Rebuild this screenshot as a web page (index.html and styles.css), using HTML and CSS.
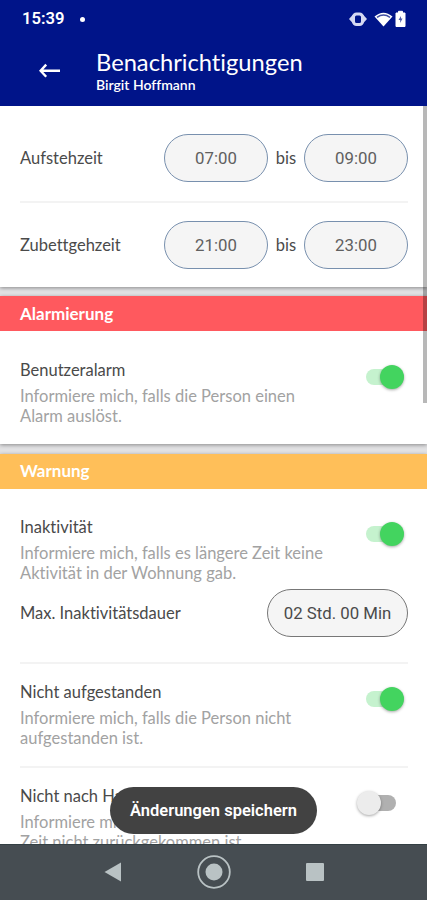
FILE: index.html
```html
<!DOCTYPE html>
<html lang="de">
<head>
<meta charset="UTF-8">
<meta name="viewport" content="width=device-width, initial-scale=1">
<title>Benachrichtigungen</title>
<link rel="stylesheet" href="styles.css">
</head>
<body>
<div class="phone">
    <header class="header">
        <div class="status">
            <span class="clock">15:39</span>
            <span class="dot"></span>
            <svg class="status-icons" width="60" height="20" viewBox="0 0 60 20">
                <path d="M1 10l4.500-5v10zM19 10l-4.500-5v10z" fill="#d5d9f2"/>
                <rect x="5.500" y="5" width="9" height="10.500" rx="3" fill="none" stroke="#d5d9f2" stroke-width="3"/>
                <path d="M26.500 7.500Q35.500-.2 44.500 7.500L35.500 17.500z" fill="#fff"/>
                <path d="M29 8.300Q35.500 3.800 42 8.300" fill="none" stroke="#3f4da3" stroke-width="1.500"/>
                <path d="M48 4h2.500V2.300h4V4H57v13.500h-9z" fill="#fff" stroke="#fff" stroke-linejoin="round"/>
                <path d="M53 7l-2.500 4h1.700v3l2.300-4.500H53z" fill="#4c59a8"/>
            </svg>
        </div>
        <div class="toolbar">
            <svg class="back" width="22" height="16" viewBox="0 0 22 16">
                <path d="M7.200 1.600L1.600 7.700l5.600 6M1.800 7.700H21" fill="none" stroke="#fff" stroke-width="2.400"/>
            </svg>
            <div class="titles">
                <h1>Benachrichtigungen</h1>
                <p>Birgit Hoffmann</p>
            </div>
        </div>
    </header>

    <main class="content">
        <section class="card times">
            <div class="time-row">
                <span class="label">Aufstehzeit</span>
                <span class="pill">07:00</span>
                <span class="until">bis</span>
                <span class="pill">09:00</span>
            </div>
            <div class="time-row">
                <span class="label">Zubettgehzeit</span>
                <span class="pill">21:00</span>
                <span class="until">bis</span>
                <span class="pill">23:00</span>
            </div>
        </section>

        <section class="card alarm">
            <h2 class="red">Alarmierung</h2>
            <div class="item">
                <div class="text">
                    <h3>Benutzeralarm</h3>
                    <p>Informiere mich, falls die Person einen<br>Alarm auslöst.</p>
                </div>
                <span class="switch on"></span>
            </div>
        </section>

        <section class="card warning">
            <h2 class="orange">Warnung</h2>
            <div class="item">
                <div class="text">
                    <h3>Inaktivität</h3>
                    <p>Informiere mich, falls es längere Zeit keine<br>Aktivität in der Wohnung gab.</p>
                </div>
                <span class="switch on"></span>
            </div>
            <div class="duration">
                <span class="label">Max. Inaktivitätsdauer</span>
                <span class="pill dark">02 Std. 00 Min</span>
            </div>
            <div class="item line">
                <div class="text">
                    <h3>Nicht aufgestanden</h3>
                    <p>Informiere mich, falls die Person nicht<br>aufgestanden ist.</p>
                </div>
                <span class="switch on"></span>
            </div>
            <div class="item line last">
                <div class="text">
                    <h3>Nicht nach Hause</h3>
                    <p>Informiere mich, falls die Person<br>Zeit nicht zurückgekommen ist.</p>
                </div>
                <span class="switch"></span>
            </div>
        </section>
        <div class="scrollbar"></div>
        <button class="save">Änderungen speichern</button>
    </main>

    <nav class="navbar">
        <svg width="18" height="20" viewBox="0 0 18 20"><path d="M.5 10L17 .5v19z" fill="#b9c2c4"/></svg>
        <svg width="34" height="34" viewBox="0 0 34 34">
            <circle cx="17" cy="17" r="15.800" fill="none" stroke="#b9c2c4" stroke-width="1.800"/>
            <circle cx="17" cy="17" r="8.500" fill="#b9c2c4"/>
        </svg>
        <svg width="18" height="18" viewBox="0 0 18 18"><rect width="18" height="18" rx="1" fill="#b9c2c4"/></svg>
    </nav>
</div>
</body>
</html>
```
FILE: styles.css
```css
*{margin:0;padding:0;box-sizing:border-box}
body{font-family:Lato,sans-serif;font-size:16.5px;line-height:20px;color:#4a4a4a;background:#fff;font-variant-ligatures:none;}
.phone{display:flex;flex-direction:column;width:427px;height:900px;overflow:hidden;}

/* header */
.header{flex:none;height:106px;background:#001489;color:#fff;}
.status{display:flex;align-items:center;height:38px;padding:0 19px 0 22px;}
.clock{font:600 16.6px/20px Roboto,sans-serif;}
.dot{width:5px;height:5px;margin-left:16px;border-radius:50%;background:#fff;}
.status-icons{margin-left:auto;}
.toolbar{display:flex;align-items:flex-start;padding:9px 0 0 39px;}
.back{margin-top:16px;}
.titles{margin-left:35px;}
.titles h1{font-size:23.7px;line-height:30px;font-weight:400;}
.titles p{font-size:14px;line-height:16px;font-weight:600;}

/* content */
.content{position:relative;flex:1;min-height:0;overflow:hidden;background:#e2e2e4;}
.card{background:#fff;box-shadow:0 1px 4px rgba(0,0,0,.4);}
.times{height:181px;padding:9px 19px 0 20px;}
.time-row{display:flex;align-items:center;height:86px;}
.time-row + .time-row{border-top:2px solid #f3f3f3;}
.label{flex:1;}
.pill{display:flex;align-items:center;justify-content:center;width:104px;height:48px;border:1px solid #7890ae;border-radius:24px;background:#f5f5f5;font:400 16.8px/20px Roboto,sans-serif;}
.time-row .pill{color:#606060;}
.until{width:36px;text-align:center;}
.pill.dark{width:141px;border-color:#777;}
.alarm{height:148px;margin-top:9px;}
.alarm .item{padding-top:29px;}
.warning{height:500px;margin-top:10px;}
.card h2{height:35px;padding-left:20px;color:#fff;font-size:17px;line-height:35px;font-weight:700;}
.card h2.orange{line-height:34px;}
.red{background:#ff595e;}
.orange{background:#ffbf59;}
.item{display:flex;justify-content:space-between;margin:0 19px 0 20px;padding-top:28px;}
.item p{margin-top:6px;color:#a2a2a2;white-space:nowrap;}
h3{font-size:16.5px;font-weight:400;}
.duration{display:flex;align-items:center;height:48px;margin:6px 19px 25px 20px;}
.line{height:105px;padding-top:18px;border-top:2px solid #f3f3f3;}
.line.last{margin-top:-1px;}

/* switch */
.switch{position:relative;flex:none;width:38px;height:16px;margin:9px 12px 0 0;border-radius:8px;background:#b0b0b0;}
.switch:before{content:"";position:absolute;top:-4px;left:-1px;width:24px;height:24px;border-radius:50%;background:#ececec;box-shadow:0 1px 3px rgba(0,0,0,.35);}
.switch.on{margin-right:4px;background:#c5f2ce;}
.switch.on:before{left:14px;background:#43d45f;}

.scrollbar{position:absolute;top:0;right:0;width:4px;height:297px;background:rgba(0,0,0,.28);}
.save{position:absolute;left:110px;bottom:10px;width:207px;height:47px;border:0;border-radius:24px;background:#424242;color:#fff;font:600 16.5px/20px Roboto,sans-serif;}

/* android buttons */
.navbar{display:flex;flex:none;align-items:center;justify-content:center;gap:75px;height:56px;padding-bottom:2px;background:#464d52;border-top:1px solid #344044;}
```
